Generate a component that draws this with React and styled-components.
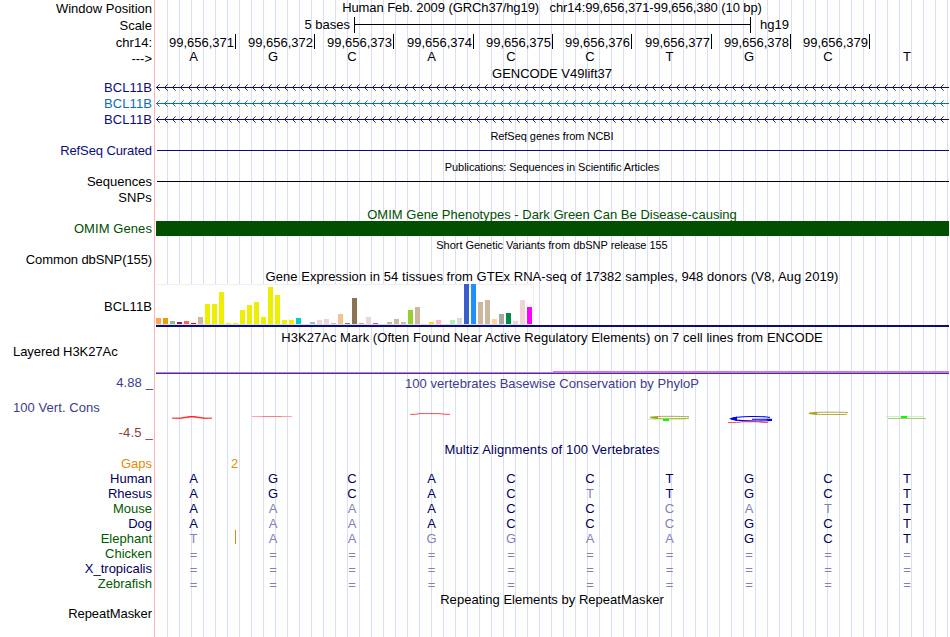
import React from "react";
import styled, { createGlobalStyle } from "styled-components";

const GlobalStyle = createGlobalStyle`
  body { margin: 0; background: #fff; overflow: hidden; }
`;

const Browser = styled.main`
  display: grid;
  grid-template-columns: 154px 795px;
  width: 950px;
  height: 637px;
  overflow: hidden;
  background: #fff;
  color: #000;
  font-family: "Liberation Sans", Arial, sans-serif;
  font-size: 13px;
  line-height: 15px;
`;

const Labels = styled.div`
  display: flex;
  flex-direction: column;
  padding-top: 1px;
`;

const Label = styled.div`
  flex: none;
  height: 15px;
  margin-top: ${(p) => p.$gap || 0}px;
  padding: 0 ${(p) => (p.$end === undefined ? 2 : p.$end)}px 0 13px;
  text-align: ${(p) => p.$align || "right"};
  color: ${(p) => p.$color || "#000"};
  letter-spacing: ${(p) => p.$ls || 0}px;
  white-space: pre;
`;

const Tracks = styled.div`
  display: flex;
  flex-direction: column;
  border-left: 1px solid #ffb4b4;
  height: 637px;
  background: repeating-linear-gradient(
    to right,
    transparent 0 0px,
    transparent 0 11px,
    #dcdcff 11px 12px
  ) 1px 0;
`;

const Title = styled.div`
  flex: none;
  height: 15px;
  margin-top: ${(p) => p.$gap || 0}px;
  text-align: center;
  font-size: ${(p) => (p.$small ? 11 : 13)}px;
  color: ${(p) => p.$color || "#000"};
  letter-spacing: ${(p) => p.$ls || 0}px;
  white-space: pre;
`;

const ScaleRow = styled.div`
  flex: none;
  display: grid;
  grid-template-columns: 195px 397px auto;
  column-gap: 4px;
  height: 16px;
  margin-top: 2px;
  > :first-child { text-align: right; }
  > :last-child { padding-left: 5px; }
`;

const ScaleBar = styled.div`
  height: 16px;
  box-sizing: border-box;
  border: solid #000;
  border-width: 0 1px;
  background: linear-gradient(#000, #000) 0 7px / 100% 1px no-repeat;
`;

const BaseGrid = styled.div`
  flex: none;
  display: grid;
  grid-template-columns: 80px 79px 79px 80px 79px 79px 80px 79px 79px 79px;
  height: 15px;
  margin-top: ${(p) => p.$gap || 0}px;
  padding-left: 1px;
`;

const Position = styled.div`
  height: 14px;
  padding: 1px 1px 0 0;
  text-align: right;
  border-right: 1px solid #000;
`;

const Base = styled.div`
  position: relative;
  padding-right: 5px;
  padding-top: ${(p) => p.$drop || 0}px;
  text-align: center;
  color: ${(p) => p.$color || "#000"};
`;

const InsertMark = styled.i`
  position: absolute;
  right: 0;
  top: -1px;
  width: 1px;
  height: 14px;
  background: #d98a14;
`;

const GapCount = styled.div`
  flex: none;
  height: 15px;
  margin-top: -1px;
  padding-left: 76px;
  color: #e68a0a;
`;

const GeneSvg = styled.svg`
  flex: none;
  display: block;
  margin-top: ${(p) => p.$gap}px;
`;

const Line = styled.div`
  flex: none;
  height: 1px;
  margin: ${(p) => p.$gap}px 0 0 2px;
  background: ${(p) => p.$color};
`;

const OmimBar = styled.div`
  flex: none;
  height: 15px;
  margin: -1px 0 0 1px;
  background: #005000;
`;

const Expression = styled.div`
  flex: none;
  margin-left: 1px;
  height: 41px;
  border-bottom: 2px solid #0c0c78;
`;

const Bars = styled.div`
  display: flex;
  align-items: flex-end;
  gap: 2px;
  box-sizing: border-box;
  width: 378px;
  height: 41px;
  background:
    linear-gradient(#f0f0f0, #f0f0f0) 0 0 / 100% 1px no-repeat,
    linear-gradient(#f0f0f0, #f0f0f0) 100% 0 / 1px 100% no-repeat,
    linear-gradient(#e0e0e0, #e0e0e0) 0 100% / 100% 1px no-repeat,
    #fff;
  padding-bottom: 1px;
`;

const Bar = styled.div`
  flex: none;
  width: 5px;
  height: ${(p) => p.$h}px;
  background: ${(p) => p.$color};
`;

const Signal = styled.div`
  flex: none;
  height: 3px;
  margin: 26px 0 0 1px;
  background:
    linear-gradient(#3c3c78, #3c3c78) 0 2px / 100% 1px no-repeat,
    linear-gradient(#d070ff, #d070ff) 0 1px / 100% 1px no-repeat,
    linear-gradient(#d070ff, #d070ff) 397px 0 / 396px 1px no-repeat;
`;

const Logo = styled.svg`
  flex: none;
  display: block;
`;

const NAVY = "#0c0c78";
const DARK = "#00005a";
const FADED = "#8282b4";
const GREEN = "#005a00";
const SLATE = "#3c3c8c";

const labels = [
  { t: "Window Position" },
  { t: "Scale", gap: 2 },
  { t: "chr14:", gap: 2 },
  { t: "--->", gap: 1 },
  { t: "BCL11B", gap: 14, c: NAVY, ls: 0.1 },
  { t: "BCL11B", gap: 1, c: "#0c6eb4", ls: 0.1 },
  { t: "BCL11B", gap: 1, c: NAVY, ls: 0.1 },
  { t: "RefSeq Curated", gap: 16, c: NAVY, ls: -0.1 },
  { t: "Sequences", gap: 16 },
  { t: "SNPs", gap: 1, ls: 0.15 },
  { t: "OMIM Genes", gap: 16, c: "#005000", ls: 0.08 },
  { t: "Common dbSNP(155)", gap: 16, ls: -0.1 },
  { t: "BCL11B", gap: 32, ls: 0.1 },
  { t: "Layered H3K27Ac", gap: 30, align: "left", ls: -0.06 },
  { t: "4.88 _", gap: 16, c: SLATE, end: 1, ls: 0.12 },
  { t: "100 Vert. Cons", gap: 10, c: SLATE, align: "left", ls: 0.06 },
  { t: "-4.5 _", gap: 10, c: "#8c3c3c", end: 1, ls: 0.2 },
  { t: "Gaps", gap: 16, c: "#e68a0a" },
  { t: "Human", c: DARK },
  { t: "Rhesus", c: DARK },
  { t: "Mouse", c: GREEN },
  { t: "Dog", c: DARK },
  { t: "Elephant", c: GREEN },
  { t: "Chicken", c: GREEN },
  { t: "X_tropicalis", c: DARK },
  { t: "Zebrafish", c: GREEN },
  { t: "RepeatMasker", gap: 15, ls: -0.06 },
];

const reference = "AGCACCTGCT";

// Lower-case letters are bases that differ from the reference sequence.
const alignments = [
  { name: "Human", seq: "AGCACCTGCT" },
  { name: "Rhesus", seq: "AGCACtTGCT" },
  { name: "Mouse", seq: "AaaACCcatT" },
  { name: "Dog", seq: "AaaACCcGCT" },
  { name: "Elephant", seq: "taaggaaGCT", insertAfter: 0 },
  { name: "Chicken", seq: "==========" },
  { name: "X_tropicalis", seq: "==========" },
  { name: "Zebrafish", seq: "==========" },
];

const Y = "#eeee00";
const TAN = "#cdb79e";
const PINK = "#eed5d2";
const tissues = [
  [6, "#ffa54f"], [6, "#ee9a00"], [3, "#8fbc8f"], [2, "#8b1c62"], [3, "#ee6a50"], [1, "#ff0000"],
  [7, TAN], [20, Y], [20, Y], [32, Y], [1, Y], [1, Y], [14, Y], [19, Y], [22, Y], [7, Y],
  [37, Y], [29, Y], [4, Y], [4, Y], [6, "#00cdcd"], [0, "#ee82ee"], [2, "#9ac0cd"],
  [4, PINK], [5, PINK], [1, TAN], [10, "#eec591"], [1, "#8b7355"], [26, "#8b7355"],
  [1, "#cdaa7d"], [7, PINK], [1, "#b452cd"], [0, "#7a378b"], [2, TAN], [5, TAN], [2, TAN],
  [14, "#9acd32"], [17, TAN], [0, "#7a67ee"], [2, "#ffd700"], [4, "#ffb6c1"], [0, "#cd9b1d"],
  [4, "#b4eeb4"], [6, "#d9d9d9"], [40, "#3a5fcd"], [40, "#1e90ff"], [22, TAN], [24, TAN],
  [5, "#ffd39b"], [10, "#a6a6a6"], [11, "#008b45"], [3, PINK], [24, PINK], [17, "#ff00ff"],
];

function Gene({ gap, color }) {
  const arrows = Array.from({ length: 99 }, (_, i) => {
    const x = 1 + i * 8;
    return `M${x + 3.7} .3L${x + 0.5} 3.5L${x + 3.7} 6.7`;
  }).join("");
  return (
    <GeneSvg $gap={gap} width="794" height="7" fill="none" stroke={color}>
      <path d="M1 3.5H794" />
      <path d={arrows} strokeWidth="0.9" />
    </GeneSvg>
  );
}

function Conservation() {
  return (
    <Logo width="794" height="51" viewBox="155 391 794 51" fill="none">
      <path d="M172 418.2Q182 418 186 416.9Q192 415.8 198 416.9Q203 418 212 418.2Q204 419 197 417.6Q192 416.6 187 417.6Q181 419 172 418.2Z" fill="#f00" stroke="#f00" strokeWidth=".5" />
      <path d="M252 416.5H292" stroke="#ff8c8c" strokeWidth=".8" />
      <path d="M262 416.5H282" stroke="#ff7070" strokeWidth=".7" />
      <path d="M410 414.4Q416 414.6 420 413.6H440Q444 414.6 450 414.4" stroke="#ff2020" strokeWidth=".8" />
      <path d="M689 416.7C676 416.2 650 416 650 417.5S676 418.9 689 418.3" stroke="#a8a020" strokeWidth=".9" />
      <path d="M649 417.5L658 416.3V418.7Z" fill="#a8a020" />
      <path d="M648 419.5H686" stroke="#a0ffa0" strokeWidth=".7" />
      <path d="M663 419H669V421H663Z" fill="#0f0" />
      <path d="M770 417.6C765 416 736 416 731 418.7C735 421.3 762 421.3 771 420.5V419.2H752" stroke="#00f" strokeWidth="1.1" />
      <path d="M729 418.7L737 416.5V421ZM766 419H772V421H768Z" fill="#00f" />
      <path d="M728 422.6Q738 422.8 742 421.8H758Q762 422.8 768 422.5" stroke="#ff2020" strokeWidth=".8" />
      <path d="M848 412.5C835 412 809 412 809 413.3S835 414.8 847 414.3" stroke="#a8a020" strokeWidth=".9" />
      <path d="M808 413.4L817 412.1V414.7Z" fill="#a8a020" />
      <path d="M886 416.5H924" stroke="#a0ffa0" strokeWidth=".8" />
      <path d="M888 418.5H926" stroke="#b8b050" strokeWidth=".8" />
      <path d="M901 416H907V418H901Z" fill="#0f0" />
    </Logo>
  );
}

export default function App() {
  return (
    <Browser>
      <GlobalStyle />
      <Labels>
        {labels.map((l, i) => (
          <Label key={i} $gap={l.gap} $color={l.c} $align={l.align} $end={l.end} $ls={l.ls}>{l.t}</Label>
        ))}
      </Labels>
      <Tracks>
        <Title $ls={-0.09}>{"Human Feb. 2009 (GRCh37/hg19)   chr14:99,656,371-99,656,380 (10 bp)"}</Title>
        <ScaleRow>
          <span>5 bases</span>
          <ScaleBar />
          <span>hg19</span>
        </ScaleRow>
        <BaseGrid $gap={1}>
          {Array.from({ length: 9 }, (_, i) => (
            <Position key={i}>{`99,656,${371 + i}`}</Position>
          ))}
        </BaseGrid>
        <BaseGrid>
          {[...reference].map((b, i) => <Base key={i}>{b}</Base>)}
        </BaseGrid>
        <Title $gap={2}>GENCODE V49lift37</Title>
        <Gene gap={3} color={NAVY} />
        <Gene gap={9} color="#0c6eb4" />
        <Gene gap={9} color={NAVY} />
        <Title $gap={6} $small $ls={-0.04}>RefSeq genes from NCBI</Title>
        <Line $gap={6} $color={NAVY} />
        <Title $gap={9} $small $ls={-0.07}>Publications: Sequences in Scientific Articles</Title>
        <Line $gap={6} $color="#000" />
        <Title $gap={25} $color="#005000" $ls={0.02}>OMIM Gene Phenotypes - Dark Green Can Be Disease-causing</Title>
        <OmimBar />
        <Title $gap={2} $small $ls={-0.04}>Short Genetic Variants from dbSNP release 155</Title>
        <Title $gap={16} $ls={0.062}>Gene Expression in 54 tissues from GTEx RNA-seq of 17382 samples, 948 donors (V8, Aug 2019)</Title>
        <Expression>
          <Bars>
            {tissues.map(([h, c], i) => <Bar key={i} $h={h} $color={c} />)}
          </Bars>
        </Expression>
        <Title $gap={3} $ls={0.047}>H3K27Ac Mark (Often Found Near Active Regulatory Elements) on 7 cell lines from ENCODE</Title>
        <Signal />
        <Title $gap={2} $color={SLATE} $ls={0.04}>100 vertebrates Basewise Conservation by PhyloP</Title>
        <Conservation />
        <Title $color={DARK} $ls={0.11}>Multiz Alignments of 100 Vertebrates</Title>
        <GapCount>2</GapCount>
        {alignments.map((row) => (
          <BaseGrid key={row.name}>
            {[...row.seq].map((b, i) => (
              <Base key={i} $color={/[A-Z]/.test(b) ? DARK : FADED} $drop={b === "=" ? 1 : 0}>
                {b.toUpperCase()}
                {row.insertAfter === i && <InsertMark />}
              </Base>
            ))}
          </BaseGrid>
        ))}
        <Title $gap={1} $ls={0.03}>Repeating Elements by RepeatMasker</Title>
      </Tracks>
    </Browser>
  );
}
